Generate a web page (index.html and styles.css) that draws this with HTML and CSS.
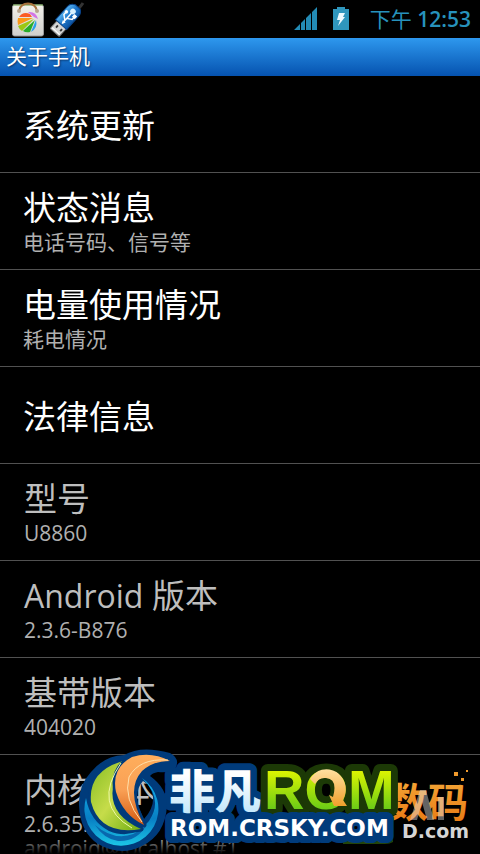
FILE: index.html
```html
<!DOCTYPE html>
<html lang="zh-CN">
<head>
<meta charset="utf-8">
<meta name="viewport" content="width=device-width, initial-scale=1">
<title>关于手机</title>
<link rel="stylesheet" href="styles.css">
</head>
<body>
<div class="screen">
  <div class="status">
    <svg class="notes" width="86" height="38" viewBox="0 0 86 38" aria-hidden="true">
      <defs>
        <linearGradient id="bag" x2="0" y2="1"><stop offset="0" stop-color="#f2f0ea"/><stop offset="1" stop-color="#cfcfcc"/></linearGradient>
        <linearGradient id="usb" x2="1"><stop offset="0" stop-color="#58b4f0"/><stop offset=".5" stop-color="#1f78cc"/><stop offset="1" stop-color="#0c529f"/></linearGradient>
      </defs>
      <rect x="12.500" y="5" width="31" height="31" rx="2" fill="url(#bag)" stroke="#999"/>
      <path d="M13 5h30" stroke="#8fc66a"/>
      <path d="M19 11C20 1 36 1 37 11" fill="none" stroke="#a8713c" stroke-width="2"/>
      <circle cx="19" cy="11" r="2" fill="#b6a48f"/><circle cx="37" cy="11" r="2" fill="#b6a48f"/>
      <path d="M19 17Q23 11 30 14L32 17Z" fill="#fb5b25"/>
      <path d="M28 12Q36 11 38 19L34 17Z" fill="#d274e6"/>
      <path d="M18 18L33 18 18 25Q17 21 18 18Z" fill="#fb9717"/>
      <path d="M18 26L34 19 22 31Q19 29 18 26Z" fill="#9bc814"/>
      <path d="M23 31L35 20 30 32Q26 33 23 31Z" fill="#27ad28"/>
      <path d="M31 32L36 20Q38 28 31 32Z" fill="#29a1e9"/>
      <path d="M79 8Q81 6 83 3" fill="none" stroke="#333" stroke-width="3"/>
      <g transform="translate(68 17) rotate(42) scale(.93)">
        <rect x="-6" y="10" width="13" height="12" rx="1" fill="#d5d5d5" stroke="#777"/>
        <path d="M-3 14h2v3h-2zM3 14h2v3h-2z" fill="#333"/><path d="M-5 20h11" stroke="#fff"/>
        <path d="M-8 11V-8Q-8-13-3-15H4Q8-13 8-8V11Z" fill="url(#usb)" stroke="#0a438a"/>
        <path d="M0 9V-8M0 5L-5 1V-3M0 2L5-1V-5" fill="none" stroke="#fff" stroke-width="1.600"/>
        <path d="M-2 6L0 10 2 6Z" fill="#fff"/><circle cy="-8" r="3" fill="#d8f1ff"/><circle cx="-5" cy="-3" r="1.800" fill="#fff"/><path d="M3-7h4v4H3z" fill="#fff"/>
      </g>
    </svg>
    <svg class="signal" width="24" height="24" viewBox="0 0 24 24" role="img" aria-label="信号">
      <path d="M0 23L6 17V23ZM7 16L11 12V23H7ZM12 11L17 6V23H12ZM18 5L23 0V23H18Z" fill="#238bb5"/>
    </svg>
    <svg class="battery" width="16" height="24" viewBox="0 0 16 24" role="img" aria-label="充电中">
      <path d="M0 2H4V0H12V2H16V23H0Z" fill="#2f96bd"/><path d="M6 6H12L10 10H12L5 19 7 13H4Z" fill="#eefaff"/>
    </svg>
    <time class="clock">下午 <b>12:53</b></time>
  </div>
  <h1 class="title">关于手机</h1>
  <ul class="list">
    <li class="row"><h2 class="name">系统更新</h2></li>
    <li class="row"><h2 class="name">状态消息</h2><p class="note">电话号码、信号等</p></li>
    <li class="row"><h2 class="name">电量使用情况</h2><p class="note">耗电情况</p></li>
    <li class="row"><h2 class="name">法律信息</h2></li>
    <li class="row info"><h2 class="name">型号</h2><p class="note">U8860</p></li>
    <li class="row info"><h2 class="name"><span class="latin">Android</span> 版本</h2><p class="note">2.3.6-B876</p></li>
    <li class="row info"><h2 class="name">基带版本</h2><p class="note">404020</p></li>
    <li class="row info"><h2 class="name">内核版本</h2><p class="note">2.6.35.7<br>android@localhost #1</p></li>
  </ul>
  <div class="fade"></div>
  <svg class="logos" viewBox="0 740 480 114">
    <defs>
      <linearGradient id="orange" x2="0" y2="1"><stop offset="0" stop-color="#f5ad3c"/><stop offset="1" stop-color="#e87510"/></linearGradient>
      <linearGradient id="ice" x2="0" y2="1"><stop offset=".3" stop-color="#fff"/><stop offset="1" stop-color="#b5e2fa"/></linearGradient>
      <linearGradient id="lime" gradientUnits="userSpaceOnUse" x1="0" y1="768" x2="0" y2="812"><stop offset="0" stop-color="#e5f700"/><stop offset="1" stop-color="#62c918"/></linearGradient>
      <linearGradient id="gold" x2="0" y2="1"><stop offset="0" stop-color="#ffe0a0"/><stop offset="1" stop-color="#f0a02c"/></linearGradient>
      <linearGradient id="leaf" x2="1" y2="1"><stop offset="0" stop-color="#86bd22"/><stop offset=".5" stop-color="#c6dc4a"/><stop offset="1" stop-color="#6eae13"/></linearGradient>
      <linearGradient id="flame" x2="0" y2="1"><stop offset="0" stop-color="#ffae5c"/><stop offset=".5" stop-color="#f9a055"/><stop offset="1" stop-color="#d45a10"/></linearGradient>
      <linearGradient id="sea" x2="0" y2="1"><stop offset="0" stop-color="#12b4ee"/><stop offset=".6" stop-color="#087fc4"/><stop offset="1" stop-color="#1cc6e6"/></linearGradient>
    </defs>
    <text class="digital" x="388" y="817">数码</text>
    <path d="M454 772h4v4h-4zM461 778h3v3h-3zM466 770h2v2h-2z" fill="#f09a2c"/>
    <text class="domain" x="402" y="838">D.com</text>
    <path d="M410 820L420 790H426L434 820H427L422 802 417 820ZM438 797h6v23h-6z" fill="#ddd" opacity=".45"/>
    <path d="M343 836H393V842Q390 844 385 844H343Z" fill="#23450a"/>
    <text class="hanzi" x="169" y="808">非凡</text>
    <text class="rom" x="264" y="809">ROM</text>
    <path d="M310 779A18 19 0 0 1 343 800L347 806 334 806 329 795 333 797Q338 779 326 778Q319 777 315 784Z" fill="url(#gold)"/>
    <text class="site" x="170" y="836">ROM.CRSKY.COM</text>
    <path fill="#003b7b" fill-rule="evenodd" d="M79 805Q78 786 91 772Q104 756 124 755Q141 745 170 753Q181 759 175 769Q171 773 158 772Q152 773 150 776Q167 788 167 806Q165 835 142 846Q121 857 98 844Q80 832 79 805ZM143 781Q135 789 138 806L144 819Q154 808 153 797Q151 785 143 781Z"/>
    <path d="M86 798A37 37 0 1 0 142 778Q164 799 149 821Q133 841 109 831Q90 821 86 798Z" fill="url(#sea)"/>
    <path d="M95 825Q121 847 146 826Q136 842 118 841Q104 839 95 825Z" fill="#0868ae"/>
    <g stroke="#003b7b" stroke-width="5" stroke-linejoin="round" paint-order="stroke">
      <path d="M123 761Q88 771 91 802Q100 836 141 829Q95 809 123 761Z" fill="url(#leaf)"/>
      <path d="M170 761Q151 751 132 757Q111 768 116 792Q123 815 144 825Q125 790 142 771Q153 761 170 761Z" fill="url(#flame)"/>
    </g>
    <path d="M121 763Q92 805 132 828" fill="none" stroke="#effaa8"/>
    <path d="M168 760Q139 758 129 777Q123 799 142 822" fill="none" stroke="#ffe0aa"/>
  </svg>
</div>
</body>
</html>
```
FILE: styles.css
```css
* { box-sizing: border-box; }
body { margin: 0; background: #000; color: #fff; font-family: "Open Sans", "Noto Sans CJK SC", sans-serif; }
h1, h2, p, ul { margin: 0; padding: 0; font-weight: 400; }
.screen { position: relative; height: 100vh; overflow: hidden; }
.status { display: flex; align-items: center; height: 38px; padding-right: 9px; color: #2792bc; }
.notes { margin-right: auto; }
.signal { margin-right: 15px; }
.battery { margin-right: 21px; }
.clock { font-size: 21px; line-height: 38px; }
.clock b { font-weight: 600; }
.title { height: 38px; padding-left: 6px; background: linear-gradient(#2e98ee, #0552af); font-size: 21px; line-height: 37px; text-shadow: 1px 1px 2px #0a3568; }
.list { list-style: none; }
.row { display: flex; flex-direction: column; min-height: 97px; padding: 13px 23px 0; border-bottom: 1px solid #515151; }
.row .name:only-child { margin: 15px 0 14px; }
.name { font-size: 33px; line-height: 44px; }
.latin { font-size: 32px; }
.note { color: #b0b0b0; font-size: 21px; line-height: 24px; }
.info { padding-left: 24px; color: #bebebe; }
.fade { position: absolute; right: 0; bottom: 0; left: 0; height: 18px; background: linear-gradient(transparent, #000); }
.logos { position: absolute; bottom: 0; left: 0; width: 100%; }
.hanzi, .rom, .site { paint-order: stroke; stroke: #003b7b; stroke-width: 14px; stroke-linejoin: round; }
.hanzi { font: oblique 8deg 900 46px "Noto Sans CJK SC", sans-serif; fill: url(#ice); }
.rom { font: 700 56px "Liberation Sans", sans-serif; fill: url(#lime); stroke: #1c3906; }
.site { font: 700 23px "DejaVu Sans", sans-serif; fill: #fff; }
.digital { font: 700 40px "Noto Sans CJK SC", sans-serif; fill: url(#orange); }
.domain { font: 700 19px "DejaVu Sans", sans-serif; fill: #d5d5d5; }
```
